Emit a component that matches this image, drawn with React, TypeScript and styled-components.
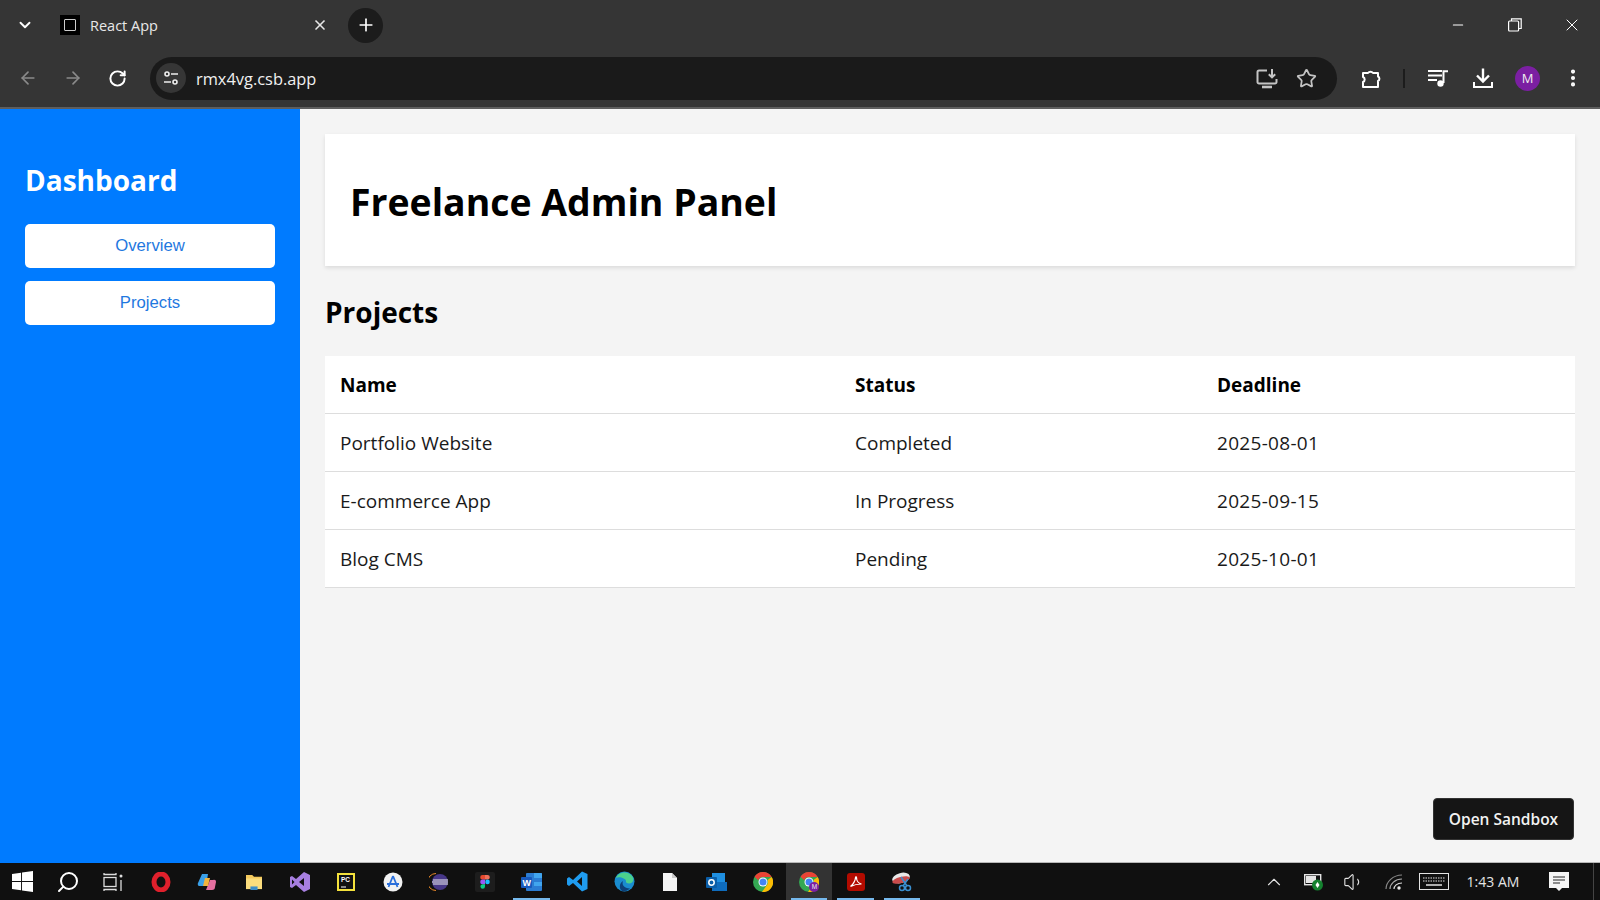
import React from 'react';
import styled, { createGlobalStyle } from 'styled-components';
import {
  ArrowLeft,
  ArrowRight,
  ChevronDown,
  ChevronUp,
  EllipsisVertical,
  Minus,
  Plus,
  RotateCw,
  Search,
  Star,
  Volume1,
  X,
} from 'lucide-react';

const GlobalStyle = createGlobalStyle`
  html, body {
    margin: 0;
    padding: 0;
    height: 100%;
    overflow: hidden;
    font-family: "Open Sans", "Noto Sans", "Liberation Sans", sans-serif;
  }
  * { box-sizing: border-box; }
`;

const Screen = styled.div`
  width: 1600px;
  height: 900px;
  display: flex;
  flex-direction: column;
  background: #f4f4f4;
`;

const TabStrip = styled.div`
  height: 50px;
  flex: none;
  display: flex;
  align-items: center;
  background: #353535;
  color: #fff;
`;

const TabMenu = styled.div`
  width: 50px;
  display: flex;
  justify-content: center;
`;

const Tab = styled.div`
  width: 288px;
  display: flex;
  align-items: center;
  padding: 0 10px;
  font-size: 14.5px;
  color: #e8e8e8;
`;

const Favicon = styled.div`
  width: 20px;
  height: 20px;
  background: #000;
  display: flex;
  align-items: center;
  justify-content: center;
  margin-right: 10px;
  &::after {
    content: '';
    width: 10px;
    height: 10px;
    border: 1px solid #ccc;
    border-radius: 1px;
  }
`;

const TabTitle = styled.span`
  flex: 1;
`;

const NewTab = styled.div`
  width: 35px;
  height: 35px;
  border-radius: 50%;
  background: #1c1c1c;
  margin-left: 10px;
  display: flex;
  align-items: center;
  justify-content: center;
`;

const WindowControls = styled.div`
  margin-left: auto;
  display: flex;
  align-items: center;
`;

const WindowButton = styled.div`
  width: 57px;
  display: flex;
  justify-content: center;
`;

const Toolbar = styled.div`
  height: 59px;
  flex: none;
  display: flex;
  align-items: center;
  padding: 0 0 1px 5px;
  background: #353535;
  border-bottom: 2px solid #5e5e5e;
`;

const NavButton = styled.div<{ $dim?: boolean }>`
  width: 45px;
  display: flex;
  justify-content: center;
  color: ${(p) => (p.$dim ? '#8a8a8a' : '#fff')};
`;

const Omnibox = styled.div`
  width: 1187px;
  height: 43px;
  margin-left: 10px;
  border-radius: 22px;
  background: #1a1a1a;
  display: flex;
  align-items: center;
  padding: 0 20px 0 6px;
  color: #f0f0f0;
  font-size: 16.4px;
`;

const SiteInfo = styled.div`
  width: 30px;
  height: 30px;
  border-radius: 50%;
  background: #363636;
  display: flex;
  align-items: center;
  justify-content: center;
  margin-right: 10px;
`;

const Url = styled.span`
  flex: 1;
`;

const OmniIcons = styled.div`
  display: flex;
  align-items: center;
  gap: 18px;
  color: #c4c4c4;
`;

const ToolIcons = styled.div`
  display: flex;
  align-items: center;
  color: #fff;
  margin-left: 11px;
`;

const ToolIcon = styled.div`
  width: 45px;
  display: flex;
  justify-content: center;
`;

const ToolDivider = styled.div`
  width: 2px;
  height: 19px;
  background: #1c1c1c;
  margin: 0 10px;
`;

const Avatar = styled.div`
  width: 25px;
  height: 25px;
  border-radius: 50%;
  background: #7b1fa2;
  color: #eee;
  font-size: 13px;
  display: flex;
  align-items: center;
  justify-content: center;
`;

const Page = styled.div`
  flex: 1;
  min-height: 0;
  display: flex;
  position: relative;
`;

const Sidebar = styled.aside`
  width: 300px;
  flex: none;
  background: #007bff;
  padding: 25px;
  color: #fff;
`;

const SidebarTitle = styled.h2`
  margin: 27px 0 25px;
  font-size: 28px;
  line-height: 38px;
  font-weight: 700;
`;

const SideButton = styled.button`
  display: block;
  width: 100%;
  height: 44px;
  margin-bottom: 13px;
  border: none;
  border-radius: 5px;
  background: #fff;
  color: #1f78e0;
  font-family: "Liberation Sans", Arial, sans-serif;
  font-size: 16.7px;
`;

const Main = styled.main`
  flex: 1;
  padding: 25px 25px 0;
  border-bottom: 1px solid #b8b8b8;
`;

const Header = styled.header`
  height: 132px;
  background: #fff;
  box-shadow: 0 2px 4px rgba(0, 0, 0, 0.1);
  padding: 3px 25px 0;
  display: flex;
  align-items: center;
`;

const PageTitle = styled.h1`
  margin: 0;
  font-size: 37.4px;
  line-height: 52px;
  font-weight: 700;
  color: #000;
`;

const SectionTitle = styled.h2`
  margin: 27px 0 25px;
  font-size: 28px;
  line-height: 38px;
  font-weight: 700;
  color: #000;
`;

const Table = styled.table`
  width: 100%;
  border-collapse: collapse;
  background: #fff;
  font-size: 19px;
  color: #1a1a1a;
`;

const Th = styled.th<{ $width?: number }>`
  height: 57px;
  width: ${(p) => (p.$width ? `${p.$width}px` : 'auto')};
  padding: 1px 15px 0;
  text-align: left;
  font-weight: 700;
  border-bottom: 1px solid #ddd;
  color: #000;
`;

const Td = styled.td`
  height: 58px;
  padding: 1px 15px 0;
  border-bottom: 1px solid #ddd;
`;

const DeadlineCell = styled(Td)`
  letter-spacing: 0.3px;
`;

const SandboxLink = styled.div`
  position: absolute;
  right: 26px;
  bottom: 23px;
  width: 141px;
  height: 42px;
  background: #151515;
  border: 1px solid #333;
  border-radius: 4px;
  color: #f2f2f2;
  font-size: 15.5px;
  font-weight: 600;
  display: flex;
  align-items: center;
  justify-content: center;
`;

const Taskbar = styled.div`
  height: 37px;
  flex: none;
  background: #101010;
  display: flex;
  align-items: center;
`;

const SystemSlot = styled.div`
  width: 45px;
  height: 37px;
  flex: none;
  display: flex;
  align-items: center;
  justify-content: center;
`;

const MirroredSearch = styled(Search)`
  transform: scaleX(-1);
`;

const TaskApps = styled.div`
  display: flex;
  margin-left: 3px;
`;

const TaskSlot = styled.div<{ $active?: boolean; $open?: boolean }>`
  width: 46.3px;
  height: 37px;
  flex: none;
  display: flex;
  align-items: center;
  justify-content: center;
  position: relative;
  background: ${(p) => (p.$active ? '#333' : 'transparent')};
  &::after {
    content: '';
    display: ${(p) => (p.$open ? 'block' : 'none')};
    position: absolute;
    left: 5px;
    right: 5px;
    bottom: 0;
    height: 2px;
    background: #76b9ed;
  }
`;

const Tray = styled.div`
  margin-left: auto;
  margin-right: 6px;
  display: flex;
  align-items: center;
  color: #e4e4e4;
`;

const TrayItem = styled.div`
  width: 40px;
  display: flex;
  justify-content: center;
`;

const Clock = styled.div`
  width: 62px;
  margin-left: 8px;
  text-align: center;
  font-size: 14px;
  white-space: nowrap;
  color: #e4e4e4;
`;

const Notifications = styled.div`
  width: 70px;
  height: 37px;
  display: flex;
  justify-content: center;
  align-items: center;
  border-right: 1px solid #444;
`;

const projects = [
  { name: 'Portfolio Website', status: 'Completed', deadline: '2025-08-01' },
  { name: 'E-commerce App', status: 'In Progress', deadline: '2025-09-15' },
  { name: 'Blog CMS', status: 'Pending', deadline: '2025-10-01' },
];

const SliderIcon = () => (
  <svg width="18" height="18" viewBox="0 0 18 18" fill="none" stroke="#eee" strokeWidth="1.6">
    <circle cx="5" cy="5" r="2" />
    <path d="M9 5h7M2 13h7" />
    <circle cx="13" cy="13" r="2" />
  </svg>
);

const InstallIcon = () => (
  <svg width="22" height="21" viewBox="0 0 22 21" fill="none" stroke="currentColor" strokeWidth="2">
    <path d="M11 2.500H3a1.500 1.500 0 0 0-1.500 1.500v10A1.500 1.500 0 0 0 3 15.500h16a1.500 1.500 0 0 0 1.500-1.500v-3" />
    <path d="M16 1v8M12.800 6.200 16 9.400l3.200-3.200" />
    <path d="M6 19h10" strokeWidth="2.600" />
  </svg>
);

const PuzzleIcon = () => (
  <svg width="22" height="22" viewBox="0 0 22 22" fill="none" stroke="currentColor" strokeWidth="2" strokeLinejoin="round">
    <path d="M3 6H8a3 3 0 0 1 5 0H18V9.500a2.500 2.500 0 0 1 0 4.500V20H3V15a2.700 2.700 0 0 0 0-5z" />
  </svg>
);

const QueueIcon = () => (
  <svg width="22" height="20" viewBox="0 0 22 20" fill="none" stroke="currentColor" strokeWidth="2">
    <path d="M1 3h14M1 7.500h14M1 12h9" />
    <path d="M16.500 15V3.200H21" />
    <circle cx="13.500" cy="15.500" r="3.200" fill="currentColor" stroke="none" />
  </svg>
);

const DownloadTrayIcon = () => (
  <svg width="22" height="22" viewBox="0 0 22 22" fill="none" stroke="currentColor" strokeWidth="2.400">
    <path d="M11 1.500V14M5 8.500l6 6 6-6" />
    <path d="M2 15v5h18v-5" strokeWidth="2" />
  </svg>
);

const WindowsLogo = () => (
  <svg width="21" height="21" viewBox="0 0 22 22" fill="#fff">
    <path d="M0 3.200 9.500 1.900V10.500H0zM10.500 1.700 22 0V10.500H10.500zM0 11.500H9.500V20.100L0 18.800zM10.500 11.500H22V22L10.500 20.300z" />
  </svg>
);

const TaskView = () => (
  <svg width="20" height="20" viewBox="0 0 20 20" fill="none" stroke="#ddd" strokeWidth="1.300">
    <path d="M1 1v1.500h12V1M1 19v-1.500h12V19" />
    <rect x="1" y="5.500" width="12" height="9" />
    <path d="M18 8v11" />
    <circle cx="18" cy="4" r="1.500" fill="#ddd" stroke="none" />
  </svg>
);

const Opera = () => (
  <svg width="20" height="20" viewBox="0 0 20 20">
    <ellipse cx="10" cy="10" rx="7" ry="8" fill="none" stroke="#e0202c" strokeWidth="5" />
  </svg>
);

const Copilot = () => (
  <svg width="20" height="20" viewBox="0 0 20 20">
    <path d="M5 2h6L9 14H3a2 2 0 0 1-2-3z" fill="#3aa0e8" />
    <path d="M9 18H15a3 3 0 0 0 3-3l1-5a2 2 0 0 0-3-2h-3z" fill="#e66fa0" />
    <path d="M8 6h5l-2 8H6z" fill="#f2b33d" />
  </svg>
);

const Folder = () => (
  <svg width="18" height="16" viewBox="0 0 20 18">
    <path d="M1 1h7l2 2h9v14H1z" fill="#f4c95d" />
    <path d="M1 5h18v12H1z" fill="#fbdd7d" />
    <path d="M6 14h8v4H6z" fill="#3c8dc9" />
  </svg>
);

const VisualStudio = () => (
  <svg width="20" height="20" viewBox="0 0 20 20">
    <path d="M14 0 20 3v14l-6 3-8-7-4 3-2-1V5l2-1 4 3zM14 6l-5 4 5 4zM2 7.500v5L4.500 10z" fill="#a77fe0" />
  </svg>
);

const PyCharm = () => (
  <svg width="18" height="18" viewBox="0 0 18 18">
    <rect width="18" height="18" fill="#f4e13c" />
    <rect x="2" y="2" width="14" height="14" fill="#111" />
    <text x="4" y="9" fontSize="6.500" fontWeight="700" fill="#fff" fontFamily="Liberation Sans">PC</text>
    <path d="M4 14h5" stroke="#fff" />
  </svg>
);

const Appstore = () => (
  <svg width="20" height="20" viewBox="0 0 20 20">
    <circle cx="10" cy="10" r="9.500" fill="#f2f2f2" />
    <path d="M10 4 5.500 15M10 4l4.500 11M4 12h12" stroke="#2a6fdb" strokeWidth="1.800" fill="none" />
  </svg>
);

const Eclipse = () => (
  <svg width="20" height="20" viewBox="0 0 20 20">
    <circle cx="11" cy="10" r="8" fill="#473788" />
    <path d="M4 8h15M3 10h16M4 12h15" stroke="#eee" strokeWidth="1" />
    <path d="M7 1.500a8.500 8.500 0 0 0 0 17" stroke="#e8882a" fill="none" />
  </svg>
);

const Figma = () => (
  <svg width="20" height="20" viewBox="0 0 20 20">
    <rect width="20" height="20" rx="2" fill="#1d1d1d" />
    <path d="M10 3H7.500a2.300 2.300 0 0 0 0 4.600H10z" fill="#e64a2e" />
    <path d="M10 3h2.500a2.300 2.300 0 0 1 0 4.600H10z" fill="#f0705a" />
    <path d="M10 7.600H7.500a2.300 2.300 0 0 0 0 4.600H10z" fill="#9a59f5" />
    <circle cx="12.500" cy="9.900" r="2.300" fill="#1abcfe" />
    <path d="M7.500 12.200H10v2.300a2.300 2.300 0 1 1-2.500-2.300z" fill="#0acf83" />
  </svg>
);

const Word = () => (
  <svg width="21" height="18" viewBox="0 0 21 18">
    <rect x="5" y="0" width="16" height="18" rx="1" fill="#2b7cd3" />
    <path d="M13 0h7a1 1 0 0 1 1 1v4h-8zM13 9h8v4h-8z" fill="#41a5ee" />
    <rect x="0" y="4" width="11" height="11" rx="1" fill="#185abd" />
    <text x="1.600" y="13" fontSize="9" fontWeight="700" fill="#fff" fontFamily="Liberation Sans">W</text>
  </svg>
);

const VSCode = () => (
  <svg width="21" height="21" viewBox="0 0 21 21">
    <path d="M15 0.500 20.500 3v15L15 20.500 6 12l-4 3-2-1.500v-6L2 6l4 3zM15 6l-5 4.500L15 15z" fill="#1f9cf0" />
  </svg>
);

const Edge = () => (
  <svg width="21" height="21" viewBox="0 0 21 21">
    <circle cx="10.500" cy="10.500" r="10" fill="#1a8ccf" />
    <path d="M2 7C4 1 14-1 18.500 5.500 20.500 9 19 12.500 15 12.500c-2 0-3.500-1-3-2.500 0-2.500-7-5-10-3z" fill="#4bd08c" />
    <path d="M9 10c-1.500 4 1 7 7 7.500-3 3-7 3-8 2.500C5 18 5 12 9 10z" fill="#0d3f78" />
  </svg>
);

const NewFile = () => (
  <svg width="14" height="18" viewBox="0 0 14 18">
    <path d="M0 0h9l5 5v13H0z" fill="#f4f4f4" />
    <path d="M9 0v5h5z" fill="#c9c9c9" />
  </svg>
);

const Outlook = () => (
  <svg width="21" height="18" viewBox="0 0 21 18">
    <rect x="6" y="0" width="13" height="9" fill="#1f8fe0" />
    <path d="M6 9h15v9H6z" fill="#0f6cbd" />
    <rect x="0" y="4" width="11" height="11" rx="1" fill="#0a5ea8" />
    <circle cx="5.500" cy="9.500" r="2.700" fill="none" stroke="#fff" strokeWidth="1.500" />
  </svg>
);

const Chrome = ({ badge }: { badge?: boolean }) => (
  <svg width="20" height="20" viewBox="0 0 20 20">
    <circle cx="10" cy="10" r="10" fill="#34a853" />
    <path d="M10 0a10 10 0 0 1 8.700 5H10a5 5 0 0 0-4.700 3.300L1.500 4.700A10 10 0 0 1 10 0z" fill="#ea4335" />
    <path d="M18.700 5A10 10 0 0 1 9 20l4.500-6.500A5 5 0 0 0 14.500 8z" fill="#fbbc04" />
    <circle cx="10" cy="10" r="4.500" fill="#fff" />
    <circle cx="10" cy="10" r="3.500" fill="#4285f4" />
    {badge && <circle cx="15" cy="15" r="5" fill="#7b1fa2" />}
    {badge && (
      <text x="12.700" y="17.300" fontSize="6.500" fill="#eee" fontFamily="Liberation Sans">M</text>
    )}
  </svg>
);

const Acrobat = () => (
  <svg width="18" height="18" viewBox="0 0 18 18">
    <rect width="18" height="18" rx="3" fill="#b30b00" />
    <path d="M3.500 13.500C6 12 8.500 7 8.500 4.500c0-1 1-1 1 0 0 3 2 6 5 6.500-3 0-8 1-11 2.500z" fill="none" stroke="#fff" strokeWidth="1.200" />
  </svg>
);

const Snip = () => (
  <svg width="22" height="20" viewBox="0 0 22 20">
    <ellipse cx="10" cy="6" rx="9" ry="5" fill="#e8e8e8" transform="rotate(-15 10 6)" />
    <ellipse cx="10" cy="8" rx="9" ry="3" fill="#c94b4b" transform="rotate(-15 10 8)" />
    <path d="M10 5 16 14M17 7l-5 7" stroke="#3a8fd0" strokeWidth="1.500" />
    <circle cx="17" cy="16" r="2.500" fill="none" stroke="#3a8fd0" strokeWidth="1.500" />
    <circle cx="11" cy="16" r="2.500" fill="none" stroke="#3a8fd0" strokeWidth="1.500" />
  </svg>
);

const BatteryLeaf = () => (
  <svg width="20" height="18" viewBox="0 0 20 18">
    <rect x="0.700" y="1.700" width="16" height="10" fill="none" stroke="#e4e4e4" strokeWidth="1.400" />
    <rect x="2" y="3" width="10" height="7" fill="#e4e4e4" />
    <circle cx="13.500" cy="12" r="5.500" fill="#14822f" />
    <path d="M13.500 9l2 3-2 3-2-3z" fill="#fff" />
  </svg>
);

const WifiIcon = () => (
  <svg width="18" height="16" viewBox="0 0 18 16" fill="none" stroke="#aaa" strokeWidth="1.200">
    <path d="M1 15C1 8 8 1 17 1" stroke="#888" />
    <path d="M5 15c0-5 5-10 12-10" />
    <path d="M9 15c0-3 3-6 8-6" stroke="#ddd" />
    <circle cx="14" cy="14" r="1.700" fill="#eee" stroke="none" />
  </svg>
);

const KeyboardIcon = () => (
  <svg width="30" height="17" viewBox="0 0 30 17" fill="none" stroke="#e4e4e4">
    <rect x="0.500" y="0.500" width="29" height="16" />
    <path d="M4 5h22M4 8h22" strokeDasharray="1.500 1" />
    <path d="M7 12h16" strokeWidth="1.500" />
  </svg>
);

const NotificationIcon = () => (
  <svg width="20" height="20" viewBox="0 0 20 20">
    <path d="M0 0h20v16h-7l-3 3-3-3H0z" fill="#f4f4f4" />
    <path d="M4 5h12M4 8h12M4 11h7" stroke="#222" strokeWidth="1.100" />
  </svg>
);

const taskApps = [
  { key: 'opera', icon: <Opera /> },
  { key: 'copilot', icon: <Copilot /> },
  { key: 'folder', icon: <Folder /> },
  { key: 'vs', icon: <VisualStudio /> },
  { key: 'pycharm', icon: <PyCharm /> },
  { key: 'appstore', icon: <Appstore /> },
  { key: 'eclipse', icon: <Eclipse /> },
  { key: 'figma', icon: <Figma /> },
  { key: 'word', icon: <Word />, open: true },
  { key: 'vscode', icon: <VSCode /> },
  { key: 'edge', icon: <Edge /> },
  { key: 'file', icon: <NewFile /> },
  { key: 'outlook', icon: <Outlook /> },
  { key: 'chrome', icon: <Chrome /> },
  { key: 'chrome2', icon: <Chrome badge />, open: true, active: true },
  { key: 'acrobat', icon: <Acrobat />, open: true },
  { key: 'snip', icon: <Snip />, open: true },
];

const App: React.FC = () => {
  return (
    <Screen>
      <GlobalStyle />
      <TabStrip>
        <TabMenu>
          <ChevronDown size={18} strokeWidth={2.5} />
        </TabMenu>
        <Tab>
          <Favicon />
          <TabTitle>React App</TabTitle>
          <X size={16} strokeWidth={2.5} />
        </Tab>
        <NewTab>
          <Plus size={20} />
        </NewTab>
        <WindowControls>
          <WindowButton>
            <Minus size={16} strokeWidth={1.6} />
          </WindowButton>
          <WindowButton>
            <svg width="14" height="14" viewBox="0 0 14 14" fill="none" stroke="#fff" strokeWidth="1.200">
              <rect x="0.600" y="3" width="10" height="10" rx="1" />
              <path d="M3.500 3V0.800h9.700v9.700H10.600" />
            </svg>
          </WindowButton>
          <WindowButton>
            <X size={20} strokeWidth={1.2} />
          </WindowButton>
        </WindowControls>
      </TabStrip>
      <Toolbar>
        <NavButton $dim>
          <ArrowLeft size={20} />
        </NavButton>
        <NavButton $dim>
          <ArrowRight size={20} />
        </NavButton>
        <NavButton>
          <RotateCw size={19} strokeWidth={2.5} />
        </NavButton>
        <Omnibox>
          <SiteInfo>
            <SliderIcon />
          </SiteInfo>
          <Url>rmx4vg.csb.app</Url>
          <OmniIcons>
            <InstallIcon />
            <Star size={21} strokeWidth={2} />
          </OmniIcons>
        </Omnibox>
        <ToolIcons>
          <ToolIcon>
            <PuzzleIcon />
          </ToolIcon>
          <ToolDivider />
          <ToolIcon>
            <QueueIcon />
          </ToolIcon>
          <ToolIcon>
            <DownloadTrayIcon />
          </ToolIcon>
          <ToolIcon>
            <Avatar>M</Avatar>
          </ToolIcon>
          <ToolIcon>
            <EllipsisVertical size={22} strokeWidth={2.5} />
          </ToolIcon>
        </ToolIcons>
      </Toolbar>
      <Page>
        <Sidebar>
          <SidebarTitle>Dashboard</SidebarTitle>
          <SideButton>Overview</SideButton>
          <SideButton>Projects</SideButton>
        </Sidebar>
        <Main>
          <Header>
            <PageTitle>Freelance Admin Panel</PageTitle>
          </Header>
          <SectionTitle>Projects</SectionTitle>
          <Table>
            <thead>
              <tr>
                <Th $width={515}>Name</Th>
                <Th $width={362}>Status</Th>
                <Th>Deadline</Th>
              </tr>
            </thead>
            <tbody>
              {projects.map((project) => (
                <tr key={project.name}>
                  <Td>{project.name}</Td>
                  <Td>{project.status}</Td>
                  <DeadlineCell>{project.deadline}</DeadlineCell>
                </tr>
              ))}
            </tbody>
          </Table>
        </Main>
        <SandboxLink>Open Sandbox</SandboxLink>
      </Page>
      <Taskbar>
        <SystemSlot>
          <WindowsLogo />
        </SystemSlot>
        <SystemSlot>
          <MirroredSearch size={24} color="#fff" />
        </SystemSlot>
        <SystemSlot>
          <TaskView />
        </SystemSlot>
        <TaskApps>
          {taskApps.map((app) => (
            <TaskSlot key={app.key} $open={app.open} $active={app.active}>
              {app.icon}
            </TaskSlot>
          ))}
        </TaskApps>
        <Tray>
          <TrayItem>
            <ChevronUp size={22} strokeWidth={1.2} />
          </TrayItem>
          <TrayItem>
            <BatteryLeaf />
          </TrayItem>
          <TrayItem>
            <Volume1 size={22} strokeWidth={1.2} />
          </TrayItem>
          <TrayItem>
            <WifiIcon />
          </TrayItem>
          <TrayItem>
            <KeyboardIcon />
          </TrayItem>
          <Clock>1:43 AM</Clock>
          <Notifications>
            <NotificationIcon />
          </Notifications>
        </Tray>
      </Taskbar>
    </Screen>
  );
};

export default App;
